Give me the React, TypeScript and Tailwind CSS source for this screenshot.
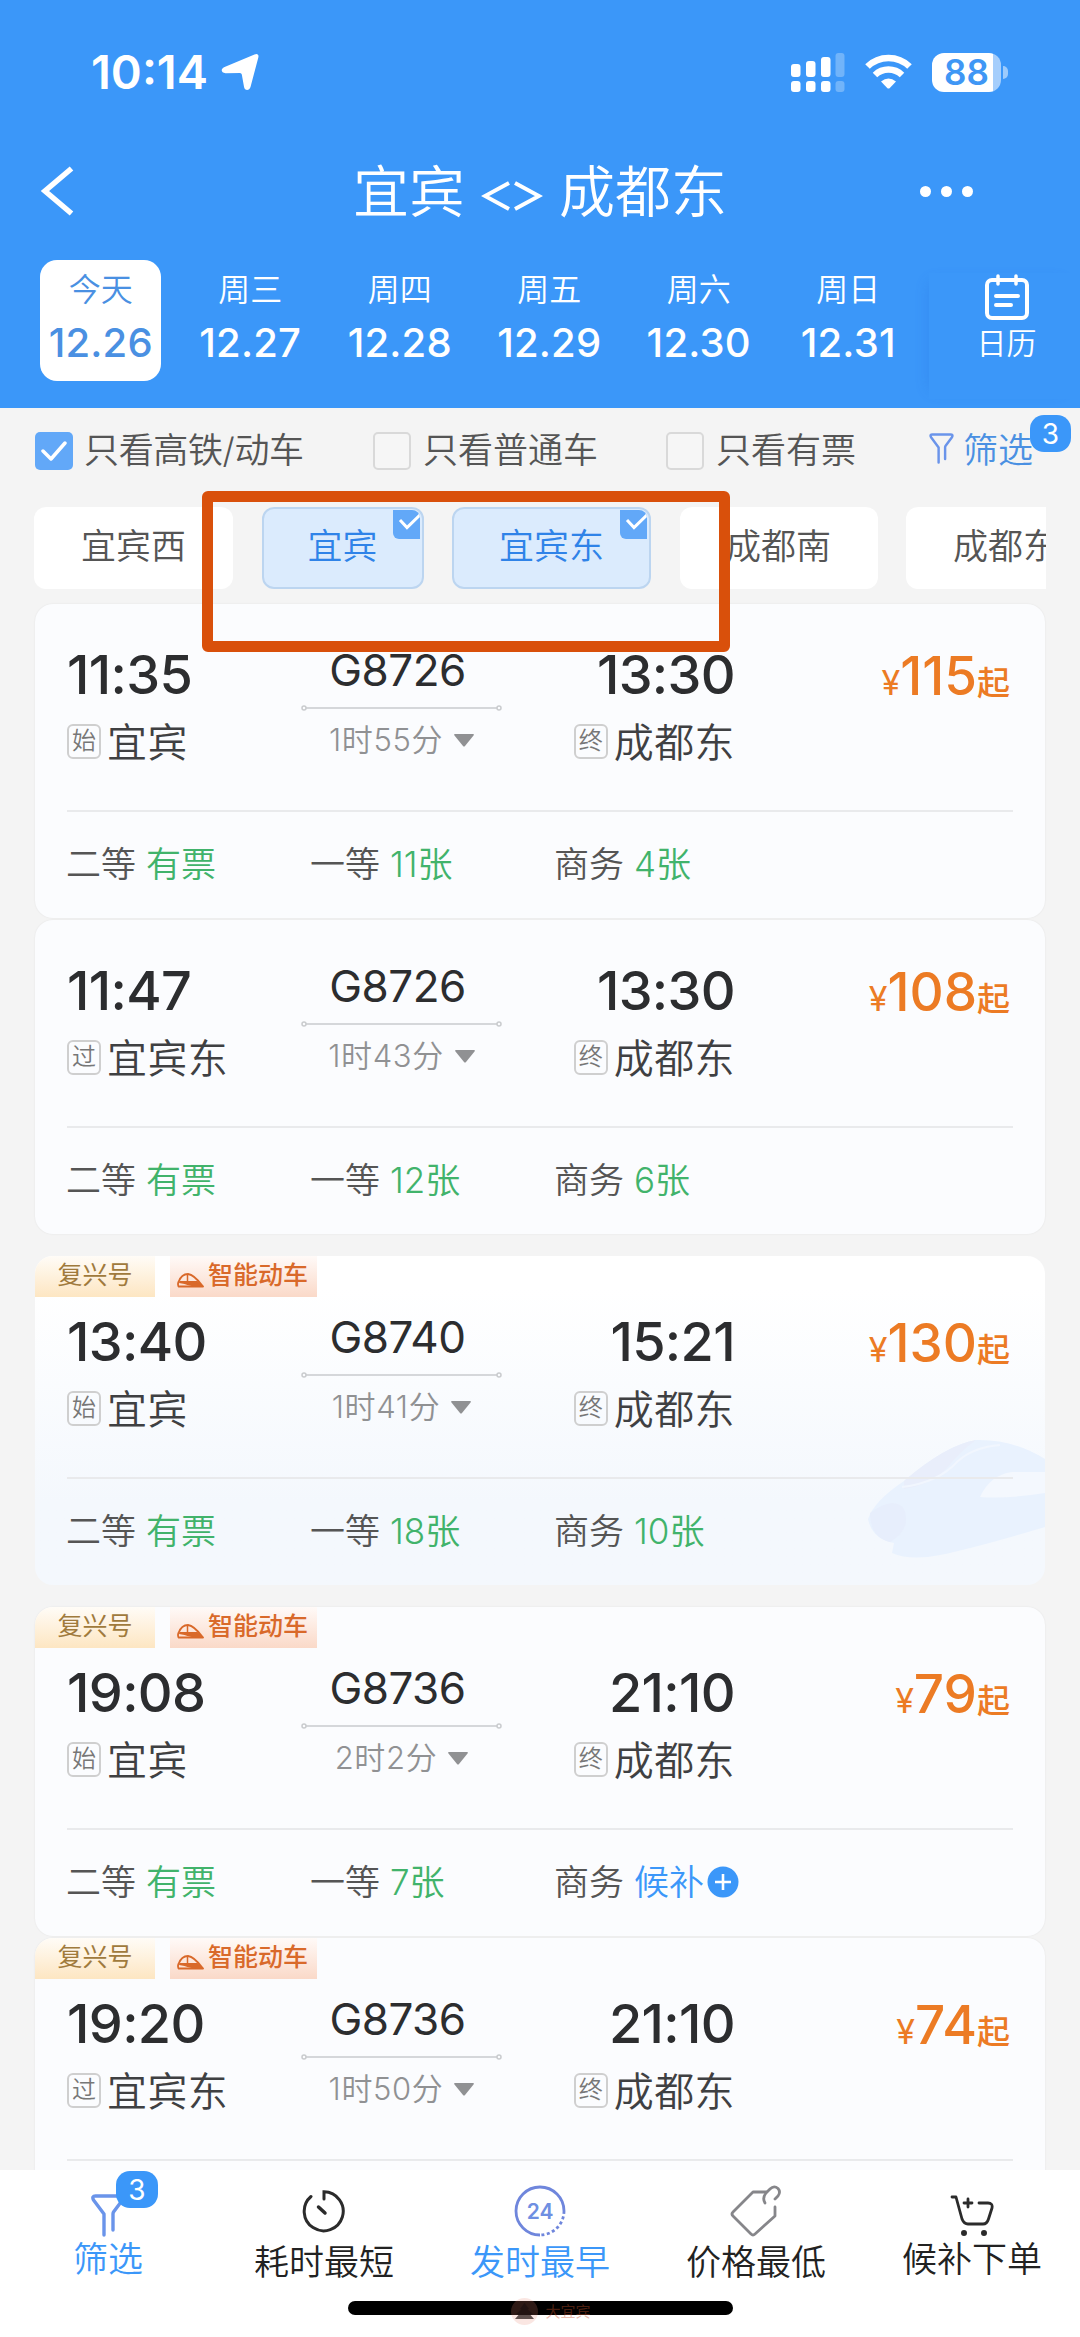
import React from 'react';

type Seat = { name: string; left: string; waitlist?: boolean };

type Train = {
  no: string;
  depart: string;
  arrive: string;
  from: string;
  fromTag: string;
  to: string;
  duration: string;
  price: string;
  seats: Seat[];
  smart?: boolean;
  highlight?: boolean;
  gap: string;
};

const days = [
  { week: '今天', date: '12.26', active: true },
  { week: '周三', date: '12.27' },
  { week: '周四', date: '12.28' },
  { week: '周五', date: '12.29' },
  { week: '周六', date: '12.30' },
  { week: '周日', date: '12.31' },
];

const stations = [
  { name: '宜宾西', width: 'w-[199px]' },
  { name: '宜宾', width: 'w-[162px]', active: true },
  { name: '宜宾东', width: 'w-[199px]', active: true },
  { name: '成都南', width: 'w-[198px]' },
  { name: '成都东', width: 'w-[199px]' },
];

const trains: Train[] = [
  {
    no: 'G8726',
    depart: '11:35',
    arrive: '13:30',
    from: '宜宾',
    fromTag: '始',
    to: '成都东',
    duration: '1时55分',
    price: '115',
    gap: 'mt-[15px]',
    seats: [
      { name: '二等', left: '有票' },
      { name: '一等', left: '11张' },
      { name: '商务', left: '4张' },
    ],
  },
  {
    no: 'G8726',
    depart: '11:47',
    arrive: '13:30',
    from: '宜宾东',
    fromTag: '过',
    to: '成都东',
    duration: '1时43分',
    price: '108',
    gap: 'mt-[2px]',
    seats: [
      { name: '二等', left: '有票' },
      { name: '一等', left: '12张' },
      { name: '商务', left: '6张' },
    ],
  },
  {
    no: 'G8740',
    depart: '13:40',
    arrive: '15:21',
    from: '宜宾',
    fromTag: '始',
    to: '成都东',
    duration: '1时41分',
    price: '130',
    smart: true,
    highlight: true,
    gap: 'mt-[22px]',
    seats: [
      { name: '二等', left: '有票' },
      { name: '一等', left: '18张' },
      { name: '商务', left: '10张' },
    ],
  },
  {
    no: 'G8736',
    depart: '19:08',
    arrive: '21:10',
    from: '宜宾',
    fromTag: '始',
    to: '成都东',
    duration: '2时2分',
    price: '79',
    smart: true,
    gap: 'mt-[22px]',
    seats: [
      { name: '二等', left: '有票' },
      { name: '一等', left: '7张' },
      { name: '商务', left: '候补', waitlist: true },
    ],
  },
  {
    no: 'G8736',
    depart: '19:20',
    arrive: '21:10',
    from: '宜宾东',
    fromTag: '过',
    to: '成都东',
    duration: '1时50分',
    price: '74',
    smart: true,
    gap: 'mt-[2px]',
    seats: [],
  },
];

const StatusBar: React.FC = () => (
  <div className="flex h-[97px] items-end pl-[91px] pr-[72px]">
    <div className="flex h-[50px] items-center">
      <span className="w-[116px] text-[47px] leading-[50px] font-semibold">10:14</span>
      <svg className="ml-[14px]" width="38" height="38" viewBox="0 0 38 38" fill="#fff">
        <path d="M33.500 1.500 C36.500 0 38.200 1.800 37.200 5 L29.500 34 C28.300 38 23.700 38 23 33.800 L20.800 21.500 Q20.500 20 19 19.900 L4.500 20.200 C0 20 -0.500 16 3 14.200 Z" />
      </svg>
    </div>
    <div className="ml-auto flex h-[50px] items-center">
      {/* Dual SIM signal */}
      <svg width="54" height="39" viewBox="0 0 54 39" fill="#fff">
        <rect x="0" y="11" width="9.5" height="13" rx="3" />
        <rect x="15" y="8" width="9.5" height="16" rx="3" />
        <rect x="30" y="4" width="9.5" height="20" rx="3" />
        <rect x="44.500" y="0" width="9" height="24" rx="3" opacity=".28" />
        <rect x="0" y="28" width="9.5" height="11" rx="3" />
        <rect x="15" y="28" width="9.5" height="11" rx="3" />
        <rect x="30" y="28" width="9.5" height="11" rx="3" />
        <rect x="44.500" y="28" width="9" height="11" rx="3" opacity=".28" />
      </svg>
      <svg className="ml-[20px]" width="47" height="36" viewBox="0 0 47 36">
        <g fill="none" stroke="#fff" strokeWidth="6.500">
          <path d="M2.500 12.500 A30 30 0 0 1 44.500 12.500" />
          <path d="M10 21 A19.500 19.500 0 0 1 37 21" />
        </g>
        <path d="M16 27.500 Q23.500 21.500 31 27.500 L24.800 34 Q23.500 35.200 22.200 34 Z" fill="#fff" />
      </svg>
      <div className="ml-[20px] flex items-center">
        <div className="flex h-[39px] w-[69px] items-center justify-center rounded-[12px] bg-[linear-gradient(90deg,#fff_88%,#a5cefc_88%)] text-[35px] leading-none font-semibold text-[#3f97f5]">
          88
        </div>
        <div className="ml-[2px] h-[13px] w-[5px] rounded-r-full bg-white/50" />
      </div>
    </div>
  </div>
);

const Header: React.FC = () => (
  <header className="h-[408px] bg-[#3b97f9] text-white">
    <StatusBar />
    <div className="flex h-[163px] items-center pt-[26px]">
      <svg className="mt-[-1px] ml-[40px]" width="36" height="50" viewBox="0 0 36 50">
        <path d="M31.500 2.500 L5 25 L31.500 47.500" fill="none" stroke="#fff" strokeWidth="5.500" />
      </svg>
      <h1 className="ml-[277px] flex w-[374px] items-center justify-between text-[56px] leading-[64px] font-[350]">
        <span>宜宾</span>
        <svg className="mt-[9px]" width="62" height="32" viewBox="0 0 62 32" fill="none" stroke="#fff" strokeWidth="4">
          <path d="M28 3 L4 16 L28 29" />
          <path d="M34 3 L58 16 L34 29" />
        </svg>
        <span>成都东</span>
      </h1>
      <div className="ml-[193px] flex gap-[10px]">
        <span className="size-[11px] rounded-full bg-white" />
        <span className="size-[11px] rounded-full bg-white" />
        <span className="size-[11px] rounded-full bg-white" />
      </div>
    </div>
    <div className="flex h-[148px] pl-[26px]">
      {days.map((d) => (
        <div key={d.date} className="flex w-[149.500px] justify-center">
          <div
            className={
              d.active
                ? 'flex h-[121px] w-[121px] flex-col items-center rounded-[17px] bg-white text-[#4a90e2]'
                : 'flex h-[121px] w-[121px] flex-col items-center'
            }
          >
            <span className="mt-[12px] text-[32px] leading-[36px] font-[350]">{d.week}</span>
            <span className="mt-[13px] text-[40px] leading-[44px] font-medium tracking-[0.005em]">{d.date}</span>
          </div>
        </div>
      ))}
      <div className="mt-[13px] ml-[6px] flex h-[126px] flex-1 flex-col items-center pl-[4px] shadow-[-8px_0_14px_-10px_rgba(30,100,220,0.3)]">
        <svg className="mt-[1px]" width="46" height="46" viewBox="0 0 46 46" fill="none" stroke="#fff" strokeWidth="4" strokeLinecap="round">
          <rect x="3" y="6" width="40" height="38" rx="5" />
          <path d="M14 2 V10 M32 2 V10" strokeWidth="3.500" />
          <path d="M12 22 H34 M12 31 H27" />
        </svg>
        <span className="mt-[5px] text-[30px] leading-[36px] font-[350]">日历</span>
      </div>
    </div>
  </header>
);

const Checkbox: React.FC<{ checked?: boolean }> = ({ checked }) =>
  checked ? (
    <span className="mt-px flex size-[38px] items-center justify-center rounded-[5px] bg-[#62a8f8]">
      <svg width="26" height="22" viewBox="0 0 26 22" fill="none" stroke="#fff" strokeWidth="3.500" strokeLinecap="round" strokeLinejoin="round">
        <path d="M2 11 L10 19 L24 3" />
      </svg>
    </span>
  ) : (
    <span className="mt-px size-[38px] rounded-[5px] border-2 border-[#d9d9d9] bg-[#f6f6f6]" />
  );

const Funnel: React.FC<{ className?: string; width: number; height: number }> = ({ className, width, height }) => (
  <svg className={className} width={width} height={height} viewBox="0 0 34 43" fill="none" stroke="#6a94ea" strokeWidth="3.400" strokeLinecap="round" strokeLinejoin="round">
    <path d="M13 41 V20 L2.500 6 Q0.500 2 4.500 2 H29.500 Q33.500 2 31.500 6 L22.500 18 Q22 19 22 20 V36" />
  </svg>
);

const FilterRow: React.FC = () => (
  <div className="flex h-[99px] items-center pb-[15px] pl-[35px] text-[35px] leading-[40px] font-[350] text-[#555]">
    <Checkbox checked />
    <span className="ml-[11px] w-[289px] tracking-[-0.01em]">只看高铁/动车</span>
    <Checkbox />
    <span className="ml-[12px] w-[243px]">只看普通车</span>
    <Checkbox />
    <span className="ml-[12px] w-[213px]">只看有票</span>
    <div className="relative flex items-center text-[#4a90e2]">
      <Funnel className="mt-[-4px]" width={25} height={31} />
      <span className="ml-[9px]">筛选</span>
      <span className="absolute top-[-15px] left-[101px] flex h-[37px] w-[41px] items-center justify-center rounded-[14px] bg-[#3b97f9] text-[28px] leading-none font-normal text-white">
        3
      </span>
    </div>
  </div>
);

const StationChips: React.FC = () => (
  <div className="mr-[34px] ml-[34px] flex h-[82px] gap-[28.500px] overflow-hidden text-[35px] font-[350]">
    {stations.map((s) => (
      <div
        key={s.name}
        className={
          s.active
            ? `${s.width} relative flex shrink-0 items-center justify-center rounded-[12px] border-2 border-[#bcd5f0] bg-[#dbebfd] pb-[3px] text-[#2f83e8]`
            : `${s.width} flex shrink-0 items-center justify-center rounded-[12px] bg-white pb-[3px] text-[#555]`
        }
      >
        {s.name}
        {s.active && (
          <span className="absolute top-px right-[2px] flex h-[29px] w-[27px] items-center justify-end overflow-hidden rounded-tr-[8px] rounded-bl-[6px] bg-[#62a8f8] pb-[4px]">
            <svg width="22" height="17" viewBox="0 0 22 17" fill="none" stroke="#fff" strokeWidth="3">
              <path d="M2 6 L9 13.500 L23 0" />
            </svg>
          </span>
        )}
      </div>
    ))}
  </div>
);

const TrainBadges: React.FC = () => (
  <div className="flex h-[41px] gap-[15px] text-[25px] font-normal">
    <span className="flex w-[120px] items-center justify-center rounded-tl-[14px] bg-gradient-to-b from-[#fffcf7] to-[#fde6c2] pb-px text-[#a07a3c]">
      复兴号
    </span>
    <span className="flex w-[147px] items-center bg-gradient-to-b from-[#fffaf8] to-[#fad9c8] pb-px pl-[7px] font-medium text-[#d9692a]">
      <svg className="mt-[9px] mr-[3px]" width="28" height="15" viewBox="0 0 28 15" fill="none" stroke="#d9692a" strokeWidth="1.800">
        <path d="M1.500 9 Q4.500 1 11 1 Q17 1.500 26 13.500 H1.500 Q0.500 11 1.500 9 Z" strokeLinejoin="round" />
        <path d="M10.500 1.500 V8" strokeWidth="1.500" />
        <path d="M2.500 8 H20.500 L27 13.500 Q12 13.500 7.500 11 L2 10 Z" fill="#d9692a" stroke="none" />
      </svg>
      智能动车
    </span>
  </div>
);

const StopName: React.FC<{ tag: string; name: string }> = ({ tag, name }) => (
  <div className="mt-[16px] flex h-[40px] items-center">
    <span className="flex h-[35px] w-[34px] items-center justify-center rounded-[6px] border-2 border-[#cfcfcf] text-[24px] leading-none font-[350] text-[#777]">
      {tag}
    </span>
    <span className="mt-[3px] ml-[6px] text-[40px] leading-[40px] font-[350] tracking-[0.01em] text-[#3f4042]">{name}</span>
  </div>
);

const TrainShape: React.FC = () => (
  <svg className="absolute right-0 bottom-[26px]" width="177" height="120" viewBox="0 0 177 120">
    <path d="M0 80 Q6 62 36 42 Q78 6 108 1 Q145 0 177 20 V88 Q110 108 72 116 Q42 122 24 114 L26 104 Q4 100 0 80 Z" fill="#e9f2fe" />
    <path d="M36 42 Q78 6 108 1 Q92 12 78 30 Q62 46 36 50 Z" fill="#e9eefb" />
    <path d="M34 48 Q70 44 90 22 Q106 8 132 6" fill="none" stroke="#f1f6fe" strokeWidth="2" />
    <path d="M112 58 Q122 36 144 33 H177 V54 Q140 60 112 58 Z" fill="#f4f8fe" />
    <path d="M2 74 Q26 56 36 70 Q44 90 22 103 Q2 98 2 74 Z" fill="#e7eefc" />
  </svg>
);

const TrainCard: React.FC<{ train: Train }> = ({ train }) => (
  <div
    className={`${train.gap} relative mx-[35px] shrink-0 overflow-hidden rounded-[18px] ${
      train.highlight ? 'bg-gradient-to-b from-white from-10% to-[#f4f8fd] to-75%' : 'bg-[#fbfcfe] shadow-[0_0_2px_rgba(0,0,0,0.08)]'
    }`}
  >
    {train.highlight && <TrainShape />}
    {train.smart && <TrainBadges />}
    <div className={`relative flex px-[32px] ${train.smart ? 'h-[180px]' : 'h-[206px] pt-[26px]'}`}>
      <div className="w-[234px] pt-[15px]">
        <div className="text-[54px] leading-[60px] font-[450] tracking-[-0.012em] text-[#2c2d2f]">{train.depart}</div>
        <StopName tag={train.fromTag} name={train.from} />
      </div>
      <div className="flex w-[201px] flex-col items-center pt-[15px]">
        <div className="mr-[8px] text-[44px] leading-[50px] font-normal tracking-[-0.012em] text-[#2c2d2f]">{train.no}</div>
        <svg className="mt-[9px]" width="201" height="8" viewBox="0 0 201 8" fill="none" stroke="#c9cbce" strokeWidth="1.500">
          <circle cx="3" cy="4" r="2" />
          <path d="M5 4 H196" />
          <circle cx="198" cy="4" r="2" />
        </svg>
        <div className="mt-[10px] flex items-center text-[31px] leading-[36px] font-[350] tracking-[0.02em] text-[#909193]">
          {train.duration}
          <svg className="ml-[11px]" width="20" height="13" viewBox="0 0 20 13" fill="#909193">
            <path d="M1 0 H19 Q20.500 0 19.500 1.500 L11 12 Q10 13 9 12 L0.500 1.500 Q-0.500 0 1 0 Z" />
          </svg>
        </div>
      </div>
      <div className="flex w-[233px] flex-col items-end pt-[15px]">
        <div className="text-[54px] leading-[60px] font-[450] tracking-[-0.012em] text-[#2c2d2f]">{train.arrive}</div>
        <StopName tag="终" name={train.to} />
      </div>
      <div className="flex h-[76px] flex-1 items-baseline justify-end pt-[16px] pr-[3px] text-[#ec7b24]">
        <span className="text-[34px] leading-[60px]">¥</span>
        <span className="text-[53px] leading-[60px] font-[450]">{train.price}</span>
        <span className="text-[33px] leading-[60px] font-medium">起</span>
      </div>
    </div>
    <div className="relative mx-[32px] h-[2px] bg-[#e9eaec]" />
    <div className="relative flex h-[106px] items-center px-[31px] pb-[3px] text-[35px] leading-[40px] font-[350] text-[#555]">
      {train.seats.map((seat) => (
        <div key={seat.name} className="flex w-[244px] items-center gap-[10px]">
          <span>{seat.name}</span>
          {seat.waitlist ? (
            <span className="flex items-center text-[#3b97f9]">
              候补
              <svg className="ml-[3px]" width="32" height="32" viewBox="0 0 32 32">
                <circle cx="16" cy="16" r="15.500" fill="#3b97f9" />
                <path d="M8 16 H24 M16 8 V24" stroke="#fff" strokeWidth="2.600" />
              </svg>
            </span>
          ) : (
            <span className="text-[#41b36b]">{seat.left}</span>
          )}
        </div>
      ))}
    </div>
  </div>
);

const BottomBar: React.FC = () => (
  <footer className="h-[167px] bg-white text-[35px] leading-[40px] font-[350] text-[#222]">
    <div className="grid h-[131px] grid-cols-5">
      <div className="flex flex-col items-center text-[#3b97f9]">
        <div className="relative mt-[24px] h-[44px]">
          <Funnel width={34} height={43} />
          <span className="absolute top-[-23px] left-[25px] flex h-[37px] w-[42px] items-center justify-center rounded-[14px] bg-[#3b97f9] text-[28px] leading-none font-normal text-white">
            3
          </span>
        </div>
        <span className="mt-px">筛选</span>
      </div>
      <div className="flex flex-col items-center">
        <svg className="mt-[19px]" width="44" height="44" viewBox="0 0 44 44" fill="none" stroke="#2b2b2b" strokeWidth="3" strokeLinecap="round">
          <path d="M9 7.500 A19.500 19.500 0 1 0 22 2.800 V10" />
          <path d="M16.500 18 L23 24" strokeWidth="3.500" />
        </svg>
        <span className="mt-[9px]">耗时最短</span>
      </div>
      <div className="flex flex-col items-center text-[#3b97f9]">
        <div className="relative mt-[15px] flex size-[52px] items-center justify-center">
          <svg className="absolute inset-0" width="52" height="52" viewBox="0 0 52 52" fill="none" stroke="#6f86dc" strokeWidth="2.800">
            <path d="M26 50 A24 24 0 1 1 50 26" />
            <path d="M50 26 A24 24 0 0 1 26 50" strokeDasharray="3 2.500" />
          </svg>
          <span className="text-[21px] leading-none font-semibold text-[#6f8fe2]">24</span>
        </div>
        <span className="mt-[5px]">发时最早</span>
      </div>
      <div className="flex flex-col items-center">
        <svg className="mt-[15px]" width="52" height="52" viewBox="0 0 52 52" fill="none" stroke="#86868a" strokeWidth="2.800" strokeLinecap="round" strokeLinejoin="round">
          <path d="M36 7 H23 L3 27 Q1 29 3 31 L21 49 Q23 51 25 49 L45 31 V22" />
          <path d="M35 18 Q32 13 36 8 L40 4 Q44 0 48 3.500 Q51 7 48 11 L45 14" />
        </svg>
        <span className="mt-[5px]">价格最低</span>
      </div>
      <div className="flex flex-col items-center">
        <svg className="mt-[24px]" width="44" height="44" viewBox="0 0 44 44" fill="none" stroke="#2b2b2b" strokeWidth="2.800" strokeLinecap="round" strokeLinejoin="round">
          <path d="M2 3 H6 L12 25 Q14 30 18 30 H33 Q37 30 38.500 25 L42 14 Q43 9 38 9 H29" />
          <path d="M14 9 H22 M18 5 V13" />
          <circle cx="14" cy="39" r="1.600" fill="#2b2b2b" />
          <circle cx="34" cy="39" r="1.600" fill="#2b2b2b" />
        </svg>
        <span className="mt-px">候补下单</span>
      </div>
    </div>
    <div className="relative mx-auto h-[14px] w-[385px] rounded-full bg-black">
      {/* Faint watermark over the home indicator */}
      <div className="absolute top-[-3px] left-[163px] flex items-center text-[15px] leading-none font-normal text-[#c8502a]/40">
        <span className="flex size-[27px] items-center justify-center rounded-full bg-[#e88070]/20">
          <svg width="21" height="18" viewBox="0 0 21 18" fill="#1c1010">
            <path d="M10.500 0 L15 6 L13.500 6.500 L19 11 L16.500 12 L20 16 H1 L4.500 12 L2 11 L7.500 6.500 L6 6 Z" opacity=".7" />
          </svg>
        </span>
        <span className="ml-[8px]">大宜宾</span>
      </div>
    </div>
  </footer>
);

const App: React.FC = () => {
  return (
    <div className="relative flex h-[2337px] w-[1080px] flex-col overflow-hidden bg-[#f4f4f4] font-['Inter','Noto_Sans_CJK_SC',sans-serif]">
      <Header />
      <FilterRow />
      <StationChips />
      <div className="flex min-h-0 flex-1 flex-col overflow-hidden">
        {trains.map((t) => (
          <TrainCard key={t.depart} train={t} />
        ))}
      </div>
      <BottomBar />
      {/* Marker around the selected stations */}
      <div className="absolute top-[491px] left-[202px] h-[161px] w-[528px] rounded-[6px] border-[11px] border-[#d9500b]" />
    </div>
  );
};

export default App;
